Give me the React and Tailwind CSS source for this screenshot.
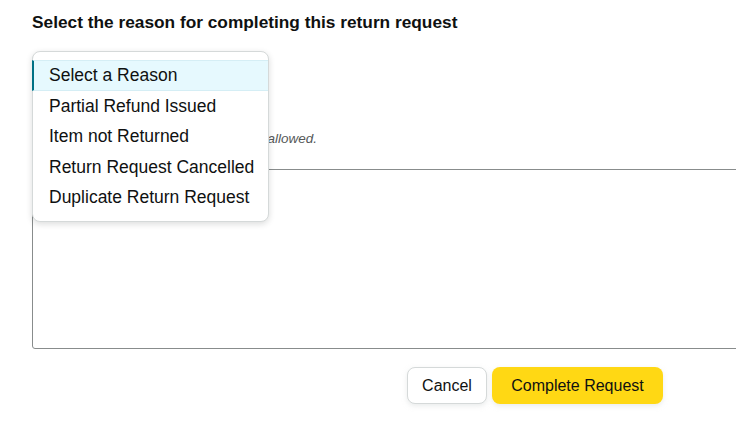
import React, { useState } from 'react';

const reasons = [
  'Select a Reason',
  'Partial Refund Issued',
  'Item not Returned',
  'Return Request Cancelled',
  'Duplicate Return Request',
];

const App = () => {
  const [selected, setSelected] = useState(0);
  const [note, setNote] = useState('');

  return (
    <div className="w-[736px] h-[438px] overflow-hidden bg-white text-[#0f1111]" style={{ fontFamily: '"Liberation Sans", Arial, sans-serif' }}>
      <div className="pl-8 pt-[10px] w-[900px]">
        <h2 className="text-[17.3px] font-bold leading-6">Select the reason for completing this return request</h2>

        <div className="relative mt-[18px]">
          <div className="w-[236px] h-[31px] rounded-lg border border-[#d5d9d9] bg-[#f0f2f2]" />

          <p className="mt-[46px] h-[20px] text-[13.5px] italic text-[#565959] leading-5">Comments. Maximum 1000 characters allowed.</p>

          <textarea
            className="mt-[20px] block w-[820px] h-[180px] rounded-[3px] border border-[#888c8c] resize-none"
            value={note}
            onChange={(e) => setNote(e.target.value)}
          />

          <ul className="absolute left-0 top-[-1px] w-[237px] rounded-lg border border-[#d5d9d9] bg-white py-2 shadow-[0_2px_6px_rgba(15,17,17,0.15)]">
            {reasons.map((r, i) => (
              <li
                key={r}
                onClick={() => setSelected(i)}
                className={
                  i === selected
                    ? 'h-[30.5px] flex items-center pl-[15px] text-[17.5px] bg-[#e6f9fe] border-y border-[#d5eef5] border-l-2 border-l-[#007185] -ml-px'
                    : 'h-[30.5px] flex items-center pl-4 text-[17.5px]'
                }
              >
                {r}
              </li>
            ))}
          </ul>
        </div>

        <div className="flex gap-[5px] mt-[18px] ml-[375px]">
          <button className="h-[37px] w-[80px] rounded-lg border border-[#d5d9d9] bg-white text-base shadow-[0_2px_5px_rgba(213,217,217,0.5)]">Cancel</button>
          <button className="h-[37px] w-[171px] rounded-lg bg-[#ffd814] text-base shadow-[0_2px_5px_rgba(213,217,217,0.5)]">Complete Request</button>
        </div>
      </div>
    </div>
  );
};

export default App;
